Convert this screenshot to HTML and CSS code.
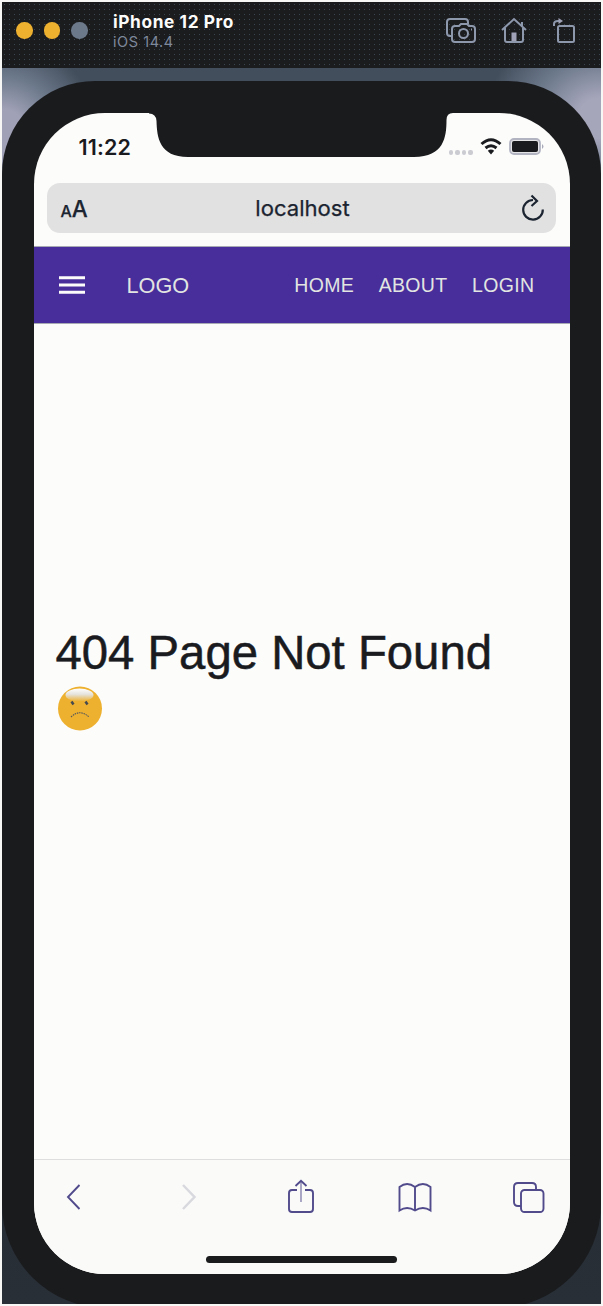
FILE: index.html
```html
<!DOCTYPE html>
<html lang="en">
<head>
<meta charset="utf-8">
<title>iPhone 12 Pro</title>
<link rel="stylesheet" href="styles.css">
</head>
<body>
<div class="window">
  <header class="titlebar">
    <div class="lights"><i></i><i></i><i class="off"></i></div>
    <div class="device"><b>iPhone 12 Pro</b><span>iOS 14.4</span></div>
    <div class="tools">
      <svg width="30" height="26" viewBox="0 0 30 26"><path d="M6 19H4q-3 0-3-3V5q0-3 3-3h15q3 0 3 3v2M9 9h4l2-2h6l2 2h3q3 0 3 3v10q0 3-3 3H9q-3 0-3-3V12q0-3 3-3z"/><circle cx="17.500" cy="16.500" r="4.500"/><path d="M25 12.500h1"/></svg>
      <svg class="home" width="26" height="26" viewBox="0 0 26 26"><path d="M1 13 13 2l12 11M4 11v12q0 2 2 2h14q2 0 2-2V11M21 9V5"/><path class="fill" d="M10.500 24v-8.500h5V24z"/></svg>
      <svg width="24" height="26" viewBox="0 0 24 26"><rect x="6" y="9" width="16" height="16" rx="1.500"/><path d="M2 9V7q0-3 4-3h2"/><path class="fill" d="M6.500 1 11 4 6.500 7z"/></svg>
    </div>
  </header>
  <div class="stage">
    <div class="phone">
      <div class="screen">
        <svg class="notch" width="304" height="45" viewBox="0 0 304 45"><path d="M0 0H304Q297.500 0 297.500 7C297.500 24 295 44 265 44H39C10 44 8 24 7.500 8Q7 .5 0 .5z"/></svg>
        <div class="status">
          <span class="time">11:22</span>
          <div class="signals">
            <div class="dots"><i></i><i></i><i></i><i></i></div>
            <svg width="22" height="17" viewBox="0 0 22 17"><path d="M1.500 6Q11-2.500 20.500 6M5.500 10q5.500-4.500 11 0" fill="none" stroke="#1a1b1e" stroke-width="3"/><path d="M7.800 12.800q3.200-2.400 6.400 0L11 16.500z" fill="#1a1b1e"/></svg>
            <svg width="36" height="17" viewBox="0 0 36 17"><rect x="1" y="1" width="30" height="15" rx="4" fill="#e4e4e6" stroke="#b3b4c2" stroke-width="1.800"/><rect x="3" y="3" width="26" height="11" rx="2" fill="#1a1b1e"/><path d="M33 6q3 2.500 0 5z" fill="#a9aab9"/></svg>
          </div>
        </div>
        <div class="address">
          <span class="aa"><small>A</small>A</span>
          <span>localhost</span>
          <svg width="24" height="28" viewBox="0 0 24 28"><path d="M12 6A9.800 9.800 0 1 0 21.800 15.500M10.500 1.500 16 7l-5.500 5" fill="none" stroke="#1b2430" stroke-width="2.200"/></svg>
        </div>
        <nav class="nav">
          <svg class="menu" width="26" height="18" viewBox="0 0 26 18"><path d="M0 1.800h26M0 9h26M0 16.300h26" stroke="#fcfcfb" stroke-width="3"/></svg>
          <span class="logo">LOGO</span>
          <div class="links"><span>HOME</span><span>ABOUT</span><span>LOGIN</span></div>
        </nav>
        <main class="content">
          <h1>404 Page Not Found</h1>
          <svg class="face" width="46" height="46" viewBox="0 0 46 46"><defs><linearGradient id="shine" x2="0" y2="1"><stop stop-color="#fff"/><stop offset=".45" stop-color="#e5e3dd"/><stop offset="1" stop-color="#eeb12f"/></linearGradient></defs><circle cx="23" cy="22.500" r="22" fill="#eeb12f"/><ellipse cx="22.500" cy="9" rx="14" ry="6.500" fill="url(#shine)"/><path d="M14.500 15.500l2 3M28.500 15.500l2 3" stroke="#454a50" stroke-width="2.500"/><path d="M14 31q9-8.500 18 0" fill="none" stroke="#51565b" stroke-width="1.100" stroke-dasharray="1.500 .8"/></svg>
        </main>
        <footer class="toolbar">
          <div class="icons">
            <svg width="34" height="36" viewBox="0 0 34 36"><path d="M22.500 6 11 18 22.500 30"/></svg>
            <svg class="disabled" width="34" height="36" viewBox="0 0 34 36"><path d="M13 6 24.500 18 13 30"/></svg>
            <svg width="34" height="36" viewBox="0 0 34 36"><path d="M13 11H8q-3 0-3 3v16q0 3 3 3h18q3 0 3-3V14q0-3-3-3h-5M11.500 7 17 1.800 22.500 7"/><path d="M17 23V2" opacity=".5"/></svg>
            <svg width="34" height="36" viewBox="0 0 34 36"><path d="M17 8Q9 2 1.500 8v23.500Q9 26.500 17 31.500 25 26.500 32.500 31.500V8Q25 2 17 8v23.500"/></svg>
            <svg width="34" height="36" viewBox="0 0 34 36"><path d="M9 27H6q-4 0-4-4V8q0-4 4-4h14q4 0 4 4v3"/><rect x="9" y="11" width="22.500" height="22" rx="3.500"/></svg>
          </div>
          <div class="indicator"></div>
        </footer>
      </div>
    </div>
  </div>
</div>
</body>
</html>
```
FILE: styles.css
```css
* { box-sizing: border-box; }
body { margin: 0; padding: 2px; background: #f7f7f5; font-family: Inter, sans-serif; color: #1a1b1e; }
svg { display: block; flex: none; }
.window { width: 599px; height: 1302px; overflow: hidden; }
.titlebar { height: 66px; display: flex; padding: 0 25px 0 14px; background: radial-gradient(circle, #3b4550 .6px, transparent .8px) 0 0 / 5px 5px, #1b1c1e; }
.lights { display: flex; gap: 11px; padding-top: 20px; width: 97px; }
.lights i { width: 16.500px; height: 16.500px; border-radius: 50%; background: #eeb12f; }
.lights .off { background: #6c798b; }
.device { display: flex; flex-direction: column; padding-top: 9px; }
.device b { font-size: 17.300px; line-height: 22px; letter-spacing: .6px; color: #fcfcfb; }
.device span { font-size: 14.500px; line-height: 18px; color: #7f899c; letter-spacing: .55px; }
.tools { display: flex; margin-left: auto; padding-top: 15px; gap: 25px; }
.tools svg { fill: none; stroke: #8e98ad; stroke-width: 2; }
.tools .fill { fill: #a0a2b8; stroke: none; }
.stage { height: 1236px; overflow: hidden; background: radial-gradient(ellipse 95px 95px at 0 65px, #a0a1b7 25%, #6c798b 60%, transparent 100%), radial-gradient(ellipse 115px 100px at 100% 50px, #a6a6bb 20%, #6c798b 60%, transparent 100%), linear-gradient(#434e5c 100px, #242a31 800px, #292f37); }
.phone { margin-top: 13px; height: 1227px; padding: 32px 31.500px 34px; border-radius: 93px 93px 104px 104px; background: #1a1b1d; }
.screen { position: relative; display: flex; flex-direction: column; height: 1161px; border-radius: 71px; overflow: hidden; background: #fcfcfb; }
.notch { position: absolute; left: 115px; top: 0; fill: #1a1b1d; }
.status { height: 70px; display: flex; justify-content: space-between; padding: 21px 25px 0 45px; }
.time { font-size: 21.500px; line-height: 27px; font-weight: 600; letter-spacing: .15px; }
.signals { display: flex; padding-top: 4px; gap: 7px; }
.dots { display: flex; gap: 2px; padding-top: 12px; }
.dots i { width: 4.500px; height: 4.500px; border-radius: 2px; background: #cbccd2; }
.address { height: 50px; margin: 0 14px 0 13px; padding: 0 11px 0 14px; border-radius: 13px; background: #e1e1e1; display: grid; grid-template-columns: 1fr auto 1fr; align-items: center; font-size: 22.100px; color: #1b2430; -webkit-text-stroke: .25px #1b2430; }
.address svg { justify-self: end; }
.aa { font-size: 22.500px; font-weight: 500; }
.aa small { font-size: 16px; }
.nav { height: 76px; margin-top: 14px; padding: 0 35px 0 25px; display: flex; align-items: center; background: #472e9b; color: #e2e5e1; font-family: "Liberation Sans", Arial, sans-serif; box-shadow: 0 0 0 1px #a7a9b3; }
.logo { margin-left: 42px; font-size: 21.700px; line-height: 25px; padding-top: 1px; }
.links { display: flex; margin-left: auto; gap: 24.500px; font-size: 19.500px; letter-spacing: .35px; }
.content { flex: 1; padding: 302px 22px 0; font-family: "Liberation Sans", Arial, sans-serif; }
h1 { margin: 0; font-size: 47.300px; line-height: 56px; font-weight: 400; white-space: nowrap; -webkit-text-stroke: .5px #1a1b1e; }
.face { margin: 5px 0 0 1px; }
.toolbar { height: 115px; border-top: 1px solid #dedede; background: #fafaf9; }
.icons { display: flex; justify-content: space-between; padding: 19px 24px 0 23px; }
.icons svg { fill: none; stroke: #514b8c; stroke-width: 1.900; }
.icons .disabled { stroke: #d8d8df; stroke-width: 2.500; }
.indicator { width: 191px; height: 7px; margin: 41px auto 0; border-radius: 4px; background: #1a1b1d; }
```
